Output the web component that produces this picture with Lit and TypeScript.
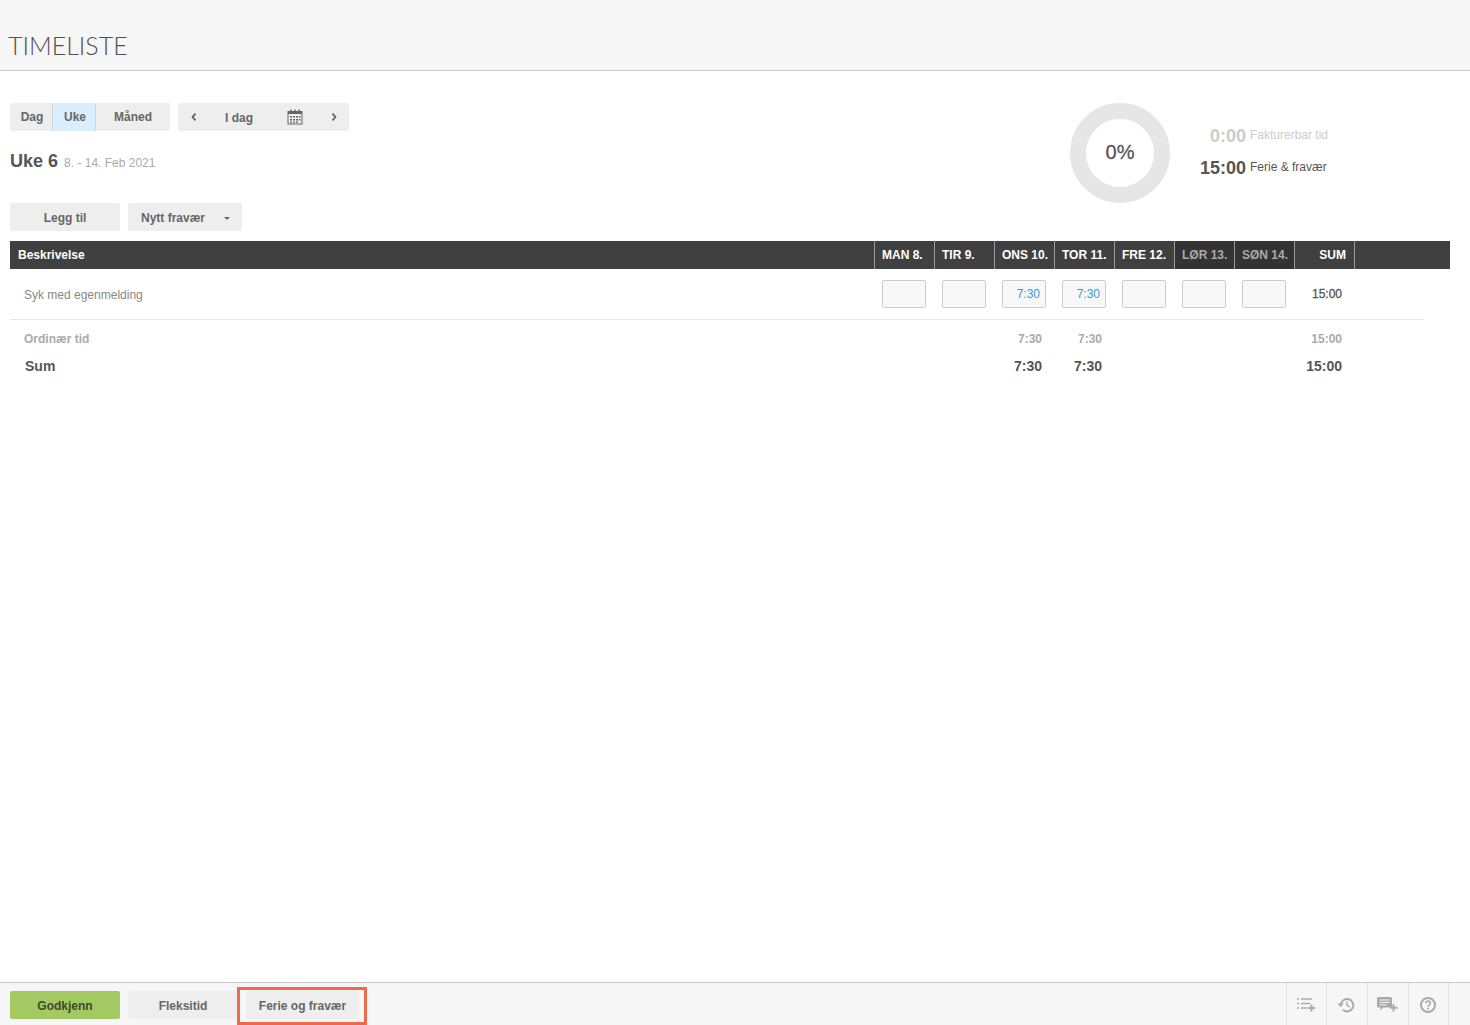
import { LitElement, html, css, svg } from "lit";
import { customElement } from "lit/decorators.js";

const days = [
  { t: "MAN 8.", v: "", w: false },
  { t: "TIR 9.", v: "", w: false },
  { t: "ONS 10.", v: "7:30", w: false },
  { t: "TOR 11.", v: "7:30", w: false },
  { t: "FRE 12.", v: "", w: false },
  { t: "LØR 13.", v: "", w: true },
  { t: "SØN 14.", v: "", w: true },
];

const calendar = svg`<svg class="cal" width="16" height="16" viewBox="0 0 16 16" fill="none">
  <rect x="1" y="2.5" width="14" height="12.5" fill="none" stroke="#666" stroke-width="1"/>
  <rect x="1" y="2" width="14" height="3" fill="#666"/>
  <path d="M4 0.5v3M8 0.5v3M12 0.5v3" stroke="#666" stroke-width="1.4"/>
  <path d="M3 7h2v1.5H3zM6 7h2v1.5H6zM9 7h2v1.5H9zM12 7h1.5v1.5H12zM3 10h2v1.5H3zM6 10h2v1.5H6zM9 10h2v1.5H9zM12 10h1.5v1.5H12zM6 12.6h2v1.2H6zM9 12.6h2v1.2H9zM3 12.6h2v1.2H3z" fill="#666"/>
</svg>`;

const chevL = svg`<svg width="6" height="8" viewBox="0 0 6 8" fill="none"><path d="M4.5 .6 1.6 4l2.9 3.4" stroke="#666" stroke-width="1.9"/></svg>`;
const chevR = svg`<svg width="6" height="8" viewBox="0 0 6 8" fill="none"><path d="M1.5 .6 4.4 4 1.5 7.4" stroke="#666" stroke-width="1.9"/></svg>`;

const iconList = svg`<svg width="20" height="16" viewBox="0 0 20 16" fill="none">
  <path d="M1 2h2M5 2h11M1 6.5h2M5 6.5h9M1 11h2M5 11h6" stroke="#aaa" stroke-width="1.5"/>
  <path d="M15.5 7.5v7M12 11h7" stroke="#aaa" stroke-width="2"/>
</svg>`;
const iconHistory = svg`<svg width="18" height="16" viewBox="0 0 18 16" fill="none">
  <path d="M3.9 8a6.2 6.2 0 1 1 2 4.8" stroke="#aaa" stroke-width="2"/>
  <path d="M0.6 6.6h6l-3 3.6z" fill="#aaa"/>
  <path d="M10 4.2v4l2.6 2" stroke="#aaa" stroke-width="1.3"/>
</svg>`;
const iconComment = svg`<svg width="21" height="16" viewBox="0 0 21 16" fill="none">
  <path d="M1.5 0h12A1.5 1.5 0 0 1 15 1.5V9a1.5 1.5 0 0 1-1.5 1.5H6L3.5 13.5v-3h-2A1.5 1.5 0 0 1 0 9V1.5A1.5 1.5 0 0 1 1.5 0z" fill="#aaa"/>
  <path d="M2.5 3h10M2.5 5.4h10M2.5 7.8h7" stroke="#f6f6f6" stroke-width="1"/>
  <path d="M16.5 7v7.5M13 10.7h7.5" stroke="#aaa" stroke-width="2"/>
</svg>`;
const iconHelp = svg`<svg width="16" height="16" viewBox="0 0 16 16" fill="none">
  <circle cx="8" cy="8" r="7" stroke="#aaa" stroke-width="2"/>
  <path d="M5.8 6.3a2.2 2.2 0 1 1 3.4 1.8c-.8.5-1.2.9-1.2 1.7" stroke="#aaa" stroke-width="1.6"/>
  <rect x="7.1" y="10.8" width="1.8" height="1.8" fill="#aaa"/>
</svg>`;

@customElement("app-root")
export class AppRoot extends LitElement {
  static styles = css`
    :host {
      display: flex;
      flex-direction: column;
      height: 1025px;
      overflow: hidden;
      font-family: "Liberation Sans", Arial, sans-serif;
      color: #555;
      background: #fff;
    }
    .page-head {
      height: 70px;
      flex: none;
      background: #f6f6f6;
      border-bottom: 1px solid #c8c8c8;
      display: flex;
      align-items: flex-end;
      padding-left: 8px;
    }
    h1 {
      margin: 0 0 11px;
      font: 300 25px/28px Lato, sans-serif;
      color: #505050;
    }
    main {
      flex: 1;
      padding: 32px 20px 0 10px;
    }
    .top {
      display: flex;
      justify-content: space-between;
      height: 100px;
    }
    .controls {
      display: flex;
      gap: 8px;
    }
    .group {
      display: flex;
      height: 28px;
      background: #eee;
      border-radius: 2px;
      font-size: 12px;
      font-weight: 700;
      color: #666;
      overflow: hidden;
    }
    .group span {
      display: flex;
      align-items: center;
      justify-content: center;
    }
    .dag { width: 42px; box-sizing: border-box; padding-left: 2px; }
    .uke {
      width: 42px;
      box-sizing: border-box;
      padding-left: 2px;
      background: #d9efff;
      margin: 0 1px;
      box-shadow: -1px 0 0 #d5d5d5, 1px 0 0 #d5d5d5;
    }
    .maned { width: 74px; }
    .nav {
      width: 171px;
      align-items: center;
      padding-left: 13px;
      box-sizing: border-box;
    }
    .nav .today { margin: 1px 0 0 28px; }
    .nav .cal { margin-left: 34px; margin-right: 28px; }
    .week {
      margin: 20px 0 0;
      display: flex;
      align-items: baseline;
      gap: 6px;
      font-size: 18px;
      line-height: 20px;
      font-weight: 700;
      color: #555;
    }
    .week small {
      font-size: 12px;
      font-weight: 400;
      color: #aaa;
    }
    .stats {
      width: 380px;
      display: flex;
    }
    .donut {
      width: 68px;
      height: 68px;
      border: 16px solid #e6e6e6;
      border-radius: 50%;
      display: flex;
      align-items: center;
      justify-content: center;
      font-size: 20px;
      -webkit-text-stroke: 0.3px #555;
      color: #555;
      flex: none;
    }
    .donut span { margin-top: -2px; }
    .figures {
      margin-left: 30px;
      width: 146px;
      padding-top: 21px;
      display: grid;
      grid-template-columns: 46px auto;
      column-gap: 4px;
      grid-auto-rows: 32px;
      align-items: start;
    }
    .figures b {
      font-size: 18px;
      line-height: 22px;
      text-align: right;
      white-space: nowrap;
      direction: rtl;
      margin-top: 1px;
    }
    .figures span {
      font-size: 12px;
      line-height: 22px;
      white-space: nowrap;
    }
    .figures .off { color: #ccc; }
    .figures .on { color: #555; }
    .actions {
      display: flex;
      gap: 8px;
    }
    .btn {
      height: 28px;
      background: #eee;
      border-radius: 2px;
      font-size: 12px;
      font-weight: 700;
      color: #666;
      display: flex;
      align-items: center;
      justify-content: center;
      box-sizing: border-box;
      padding-top: 2px;
      flex: none;
    }
    .w110 { width: 110px; }
    .dropdown {
      width: 114px;
      justify-content: flex-start;
      padding-left: 13px;
    }
    .caret {
      width: 0;
      height: 0;
      margin-left: 19px;
      border-left: 3px solid transparent;
      border-right: 3px solid transparent;
      border-top: 3px solid #666;
    }
    .thead {
      display: grid;
      grid-template-columns: 864px repeat(8, 60px) 1fr;
      margin-top: 10px;
      height: 28px;
      background: #404040;
      color: #fff;
      font-size: 12px;
      font-weight: 700;
      line-height: 28px;
    }
    .thead > div {
      border-left: 1px solid #999;
      padding-left: 7px;
      white-space: nowrap;
    }
    .thead > div:first-child { border-left: 0; padding-left: 8px; }
    .thead .weekend { background: #333; color: #aaa; }
    .thead .s { text-align: right; padding: 0 8px 0 0; }
    .rows { width: 1414px; }
    .row, .ordinary, .sum {
      display: grid;
      grid-template-columns: 864px repeat(8, 60px);
    }
    .row {
      height: 50px;
      border-bottom: 1px solid #e4e4e4;
      align-items: center;
      font-size: 12px;
      color: #888;
    }
    .row .desc { padding-left: 14px; padding-top: 2px; }
    .field {
      width: 44px;
      height: 28px;
      box-sizing: border-box;
      margin-left: 8px;
      border: 1px solid #ccc;
      border-radius: 2px;
      background: #f8f8f8;
      color: #3a9bd5;
      text-align: right;
      padding-right: 5px;
      line-height: 26px;
    }
    .total {
      text-align: right;
      padding-right: 12px;
      color: #555;
    }
    .row .total { -webkit-text-stroke: 0.3px #555; }
    .ordinary {
      height: 38px;
      align-items: center;
      font-size: 12px;
      font-weight: 700;
      color: #aaa;
      line-height: 38px;
    }
    .ordinary .desc { padding-left: 14px; }
    .ordinary .total { color: #aaa; font-weight: 700; }
    .sum {
      height: 16px;
      line-height: 16px;
      align-items: center;
      font-size: 14px;
      font-weight: 700;
      color: #555;
    }
    .sum .desc { padding-left: 15px; }
    .sum .total { color: #555; font-weight: 700; }
    footer {
      flex: none;
      height: 42px;
      background: #f6f6f6;
      border-top: 1px solid #c8c8c8;
      display: flex;
      align-items: flex-start;
      padding-left: 10px;
      gap: 8px;
    }
    footer .btn { margin-top: 8px; }
    .go { background: #a3c962; color: #3f4a2a; }
    .ferie { width: 113px; position: relative; }
    .ferie::after {
      content: "";
      position: absolute;
      left: -9px;
      right: -8px;
      top: -4px;
      bottom: -6px;
      border: 3px solid #ee6a4c;
      pointer-events: none;
    }
    .tools {
      margin-left: auto;
      display: flex;
      height: 42px;
      margin-right: 21px;
      border-right: 1px solid #e2e2e2;
    }
    .tools div {
      width: 41px;
      box-sizing: border-box;
      border-left: 1px solid #e2e2e2;
      display: flex;
      align-items: center;
      justify-content: center;
      padding: 1px 2px 0 0;
    }
    .tools div:first-child, .tools div:last-child { width: 40px; }
  `;

  render() {
    return html`
      <header class="page-head"><h1>TIMELISTE</h1></header>
      <main>
        <section class="top">
          <div>
            <div class="controls">
              <div class="group">
                <span class="dag">Dag</span><span class="uke">Uke</span><span class="maned">Måned</span>
              </div>
              <div class="group nav">
                ${chevL}<span class="today">I dag</span>${calendar}${chevR}
              </div>
            </div>
            <div class="week">Uke 6 <small>8. - 14. Feb 2021</small></div>
          </div>
          <div class="stats">
            <div class="donut"><span>0%</span></div>
            <div class="figures">
              <b class="off">0:00</b><span class="off">Fakturerbar tid</span>
              <b class="on">15:00</b><span class="on">Ferie &amp; fravær</span>
            </div>
          </div>
        </section>
        <div class="actions">
          <div class="btn w110">Legg til</div>
          <div class="btn dropdown">Nytt fravær<i class="caret"></i></div>
        </div>
        <div class="thead">
          <div>Beskrivelse</div>
          ${days.map((d) => html`<div class=${d.w ? "weekend" : ""}>${d.t}</div>`)}
          <div class="s">SUM</div>
          <div></div>
        </div>
        <div class="rows">
          <div class="row">
            <div class="desc">Syk med egenmelding</div>
            ${days.map((d) => html`<div class="field">${d.v}</div>`)}
            <div class="total">15:00</div>
          </div>
          <div class="ordinary">
            <div class="desc">Ordinær tid</div>
            ${days.map((d) => html`<div class="total">${d.v}</div>`)}
            <div class="total">15:00</div>
          </div>
          <div class="sum">
            <div class="desc">Sum</div>
            ${days.map((d) => html`<div class="total">${d.v}</div>`)}
            <div class="total">15:00</div>
          </div>
        </div>
      </main>
      <footer>
        <div class="btn w110 go">Godkjenn</div>
        <div class="btn w110">Fleksitid</div>
        <div class="btn ferie">Ferie og fravær</div>
        <div class="tools">
          <div>${iconList}</div>
          <div>${iconHistory}</div>
          <div>${iconComment}</div>
          <div>${iconHelp}</div>
        </div>
      </footer>
    `;
  }
}
